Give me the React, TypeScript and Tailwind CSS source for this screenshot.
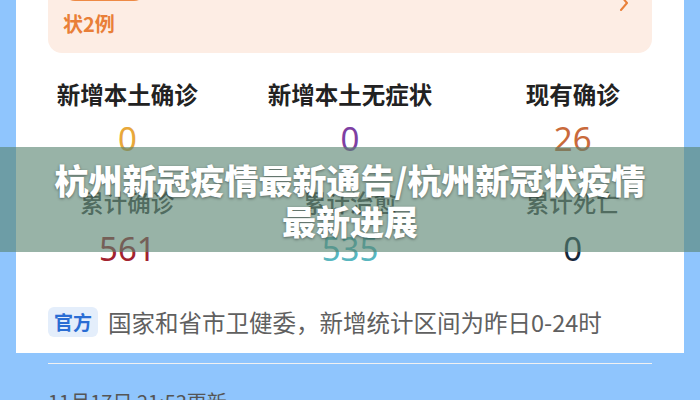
import React from "react";

const cjk = "font-['Noto_Sans_CJK_SC','Noto_Sans',sans-serif]";

const topStats = [
  { label: "新增本土确诊", value: "0", color: "text-[#e8a83a]" },
  { label: "新增本土无症状", value: "0", color: "text-[#7e3fa3]" },
  { label: "现有确诊", value: "26", color: "text-[#c96a3b]" },
];

const totalStats = [
  { label: "累计确诊", value: "561", color: "text-[#a3232f]" },
  { label: "累计治愈", value: "535", color: "text-[#58b6bf]" },
  { label: "累计死亡", value: "0", color: "text-[#17283a]" },
];

function StatRow({ items, labelClass, first }: { items: typeof topStats; labelClass: string; first?: boolean }) {
  return (
    <div className={`grid grid-cols-3 ${first ? "mt-[26px]" : "mt-[28px]"}`}>
      {items.map((s) => (
        <div key={s.label} className="flex flex-col items-center">
          <div className={`text-[23.5px] leading-[30px] ${labelClass}`}>{s.label}</div>
          <div
            className={`font-['Noto_Sans',sans-serif] text-[33px] leading-[40px] ${s.color} ${
              first ? "mt-[10px]" : "mt-[12px]"
            }`}
          >
            {s.value}
          </div>
        </div>
      ))}
    </div>
  );
}

export default function App() {
  return (
    <div className={`relative w-[700px] h-[400px] overflow-hidden bg-[#8fc5fd] px-[16px] ${cjk}`}>
      <div className="h-full bg-white">
        {/* orange notice box, top cut off */}
        <div className="px-[32px]">
          <div className="-mt-[47px] h-[100px] rounded-[14px] bg-[#fdede4] pl-[15px] pr-[22px] pt-[22px] flex justify-between">
            <div className="flex flex-col">
              <div className="h-[28px] flex items-center gap-2">
                <span className="h-[24px] w-[83px] rounded-full border-2 border-[#ee8a45] bg-[#f39a5a]" />
                <span className="text-[20px] font-bold text-[#e97f38]">本土新增确诊0例，新增无症</span>
              </div>
              <div className="mt-[7px] h-[28px] text-[20px] leading-[28px] font-bold text-[#e97f38]">状2例</div>
            </div>
            <svg width="12" height="18" viewBox="0 0 12 18" className="self-start mt-[19px]">
              <path d="M3 2 L9 9 L3 16" fill="none" stroke="#e9803a" strokeWidth="2" strokeLinecap="round" strokeLinejoin="round" />
            </svg>
          </div>
        </div>

        <StatRow items={topStats} labelClass="font-semibold text-[#222]" first />
        <StatRow items={totalStats} labelClass="font-medium text-[#444]" />

        <div className="px-[32px]">
          <div className="mt-[38px] flex items-center gap-[10px]">
            <span className="h-[30px] w-[50px] rounded-[6px] bg-[#e4eefb] text-[#2a6dd4] text-[19px] font-bold flex items-center justify-center">
              官方
            </span>
            <span className="text-[23.5px] leading-[30px] text-[#606060]">国家和省市卫健委，新增统计区间为昨日0-24时</span>
          </div>
          <div className="mt-[26px] border-t border-[#f1f1f1]" />
          <div className="mt-[24px] text-[20px] leading-[28px] text-[#555]">11月17日 21:53更新</div>
        </div>
      </div>

      {/* title overlay band */}
      <div className="absolute inset-x-0 top-[147px] h-[105px] bg-[rgba(88,132,113,0.62)] flex items-center justify-center">
        <h1 className="text-center text-white font-black text-[34px] leading-[41px] [text-shadow:0_1px_3px_rgba(0,0,0,0.45)]">
          杭州新冠疫情最新通告/杭州新冠状疫情
          <br />
          最新进展
        </h1>
      </div>
    </div>
  );
}
